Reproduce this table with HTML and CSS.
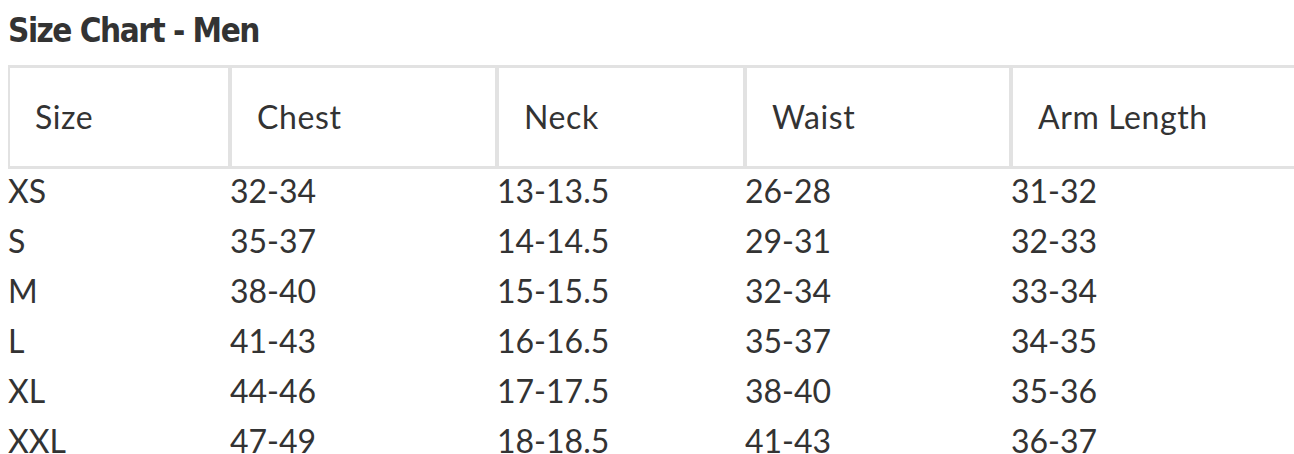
FILE: index.html
```html
<!DOCTYPE html>
<html lang="en">
<head>
<meta charset="utf-8">
<title>Size Chart - Men</title>
<link rel="stylesheet" href="styles.css">
</head>
<body>
<div class="page">
  <h2 class="title">Size Chart - Men</h2>
  <div class="table-wrap">
    <table class="chart">
      <colgroup>
        <col class="c1"><col class="c2"><col class="c3"><col class="c4"><col class="c5">
      </colgroup>
      <thead>
        <tr><th>Size</th><th>Chest</th><th>Neck</th><th>Waist</th><th>Arm Length</th></tr>
      </thead>
      <tbody>
        <tr><td>XS</td><td>32-34</td><td>13-13.5</td><td>26-28</td><td>31-32</td></tr>
        <tr><td>S</td><td>35-37</td><td>14-14.5</td><td>29-31</td><td>32-33</td></tr>
        <tr><td>M</td><td>38-40</td><td>15-15.5</td><td>32-34</td><td>33-34</td></tr>
        <tr><td>L</td><td>41-43</td><td>16-16.5</td><td>35-37</td><td>34-35</td></tr>
        <tr><td>XL</td><td>44-46</td><td>17-17.5</td><td>38-40</td><td>35-36</td></tr>
        <tr><td>XXL</td><td>47-49</td><td>18-18.5</td><td>41-43</td><td>36-37</td></tr>
      </tbody>
    </table>
  </div>
</div>
</body>
</html>
```
FILE: styles.css
```css
html, body {
  margin: 0;
  padding: 0;
  overflow: hidden;
  background: #ffffff;
}
.page {
  padding: 0 0 0 8px;
  color: #333333;
  font-family: Lato, "Open Sans", sans-serif;
}
.title {
  margin: 0;
  padding-top: 8px;
  font-family: "DejaVu Sans Condensed", "Liberation Sans", sans-serif;
  font-weight: 700;
  font-size: 33px;
  letter-spacing: -1.5px;
  line-height: 46px;
  color: #333333;
}
.table-wrap {
  margin-top: 11px;
  overflow: hidden;
}
.chart {
  border-collapse: separate;
  border-spacing: 0;
  table-layout: fixed;
  width: 1320px;
  font-size: 32px;
}
.c1 { width: 222px; }
.c2 { width: 267px; }
.c3 { width: 248px; }
.c4 { width: 266px; }
.c5 { width: 317px; }
.chart th {
  font-weight: 400;
  text-align: left;
  border-style: solid;
  border-color: #e2e2e2;
  border-width: 3px 2px;
  padding: 0 0 0 25px;
  height: 98px;
  line-height: 40px;
  letter-spacing: 0.6px;
  vertical-align: middle;
}
.chart td {
  padding: 0 0 6px 0;
  line-height: 44px;
  white-space: nowrap;
}
```
